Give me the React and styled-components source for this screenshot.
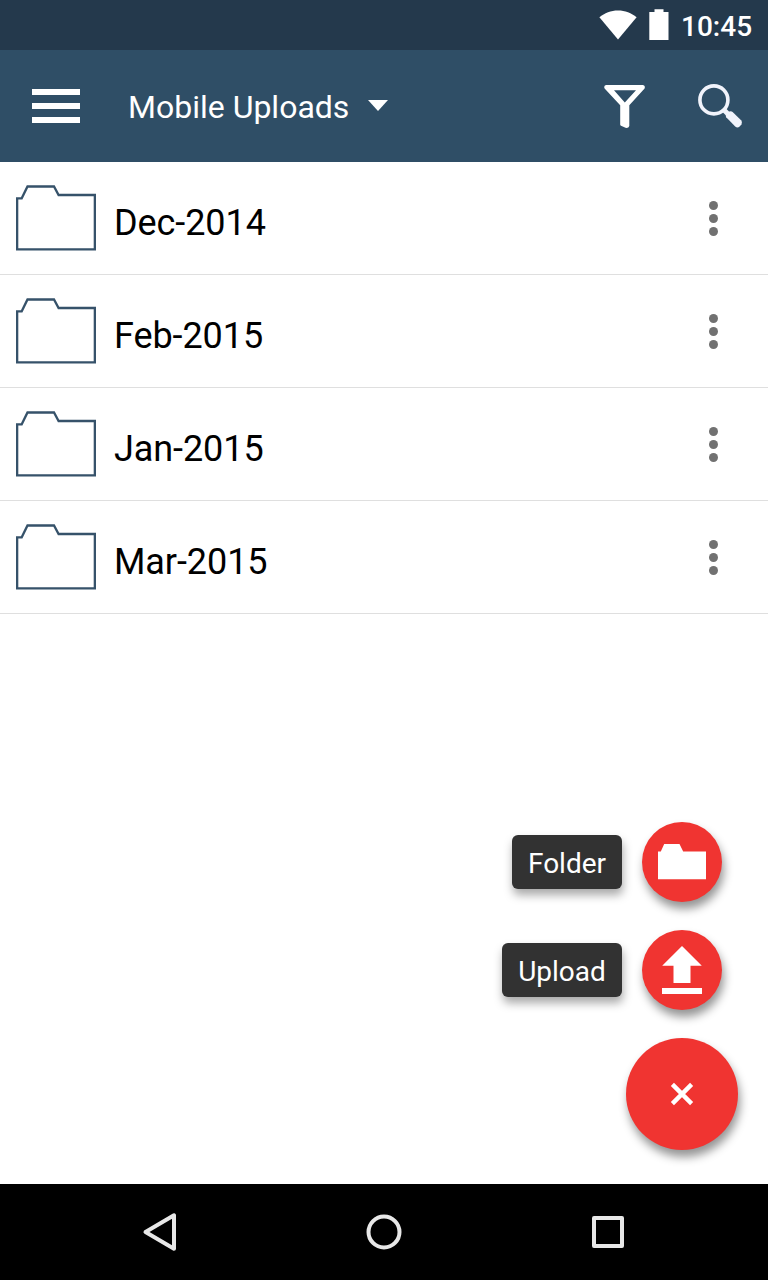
import React from "react";
import styled, { createGlobalStyle } from "styled-components";

const GlobalStyle = createGlobalStyle`
  *, *::before, *::after { box-sizing: border-box; }
  body { margin: 0; background: #fff; }
  button { border: 0; padding: 0; background: none; font: inherit; color: inherit; cursor: pointer; }
  svg { display: block; flex: none; }
`;

const Screen = styled.div`
  position: relative;
  display: flex;
  flex-direction: column;
  width: 768px;
  height: 1280px;
  overflow: hidden;
  background: #fff;
  font-family: Roboto, "Liberation Sans", sans-serif;
`;

const StatusBar = styled.header`
  display: flex;
  align-items: center;
  justify-content: flex-end;
  gap: 12px;
  flex: none;
  height: 50px;
  padding-right: 16px;
  background: #24394c;
  color: #fff;
`;

const Clock = styled.time`
  font-size: 28px;
  font-weight: 500;
  line-height: 32px;
  padding-top: 3px;
  width: 71px;
  white-space: nowrap;
`;

const AppBar = styled.div`
  display: flex;
  align-items: center;
  flex: none;
  height: 112px;
  padding: 0 24px 0 32px;
  background: #2f4e66;
  color: #fff;
`;

const MenuButton = styled.button`
  display: flex;
  flex-direction: column;
  gap: 8px;
  width: 48px;
  margin-right: 48px;
`;

const MenuLine = styled.span`
  height: 6px;
  background: #fff;
`;

const Title = styled.button`
  display: flex;
  align-items: center;
  gap: 19px;
  flex: 1;
  font-size: 32px;
  line-height: 38px;
  padding-top: 2px;
  white-space: nowrap;
`;

const Caret = styled.span`
  padding-bottom: 3px;
`;

const Actions = styled.div`
  display: flex;
  align-items: center;
  gap: 52px;
`;

const List = styled.ul`
  flex: 1;
  margin: 0;
  padding: 0;
  list-style: none;
`;

const Row = styled.li`
  display: flex;
  align-items: center;
  height: 113px;
  padding: 0 48px 0 16px;
  border-bottom: 1px solid #dfdfdf;
`;

const RowName = styled.span`
  flex: 1;
  padding: 9px 0 0 18px;
  font-size: 36px;
  line-height: 42px;
  letter-spacing: -0.08px;
  color: #000;
`;

const MoreButton = styled.button`
  display: flex;
  flex-direction: column;
  align-items: center;
  gap: 4px;
  width: 13px;
`;

const Dot = styled.span`
  width: 9px;
  height: 9px;
  border-radius: 50%;
  background: #717171;
`;

const SpeedDial = styled.div`
  position: absolute;
  right: 30px;
  bottom: 130px;
  display: flex;
  flex-direction: column;
  align-items: flex-end;
  gap: 28px;
`;

const DialItem = styled.div`
  display: flex;
  align-items: center;
  gap: 20px;
  margin-right: 16px;
`;

const DialLabel = styled.span`
  display: flex;
  align-items: center;
  justify-content: center;
  width: ${(p) => p.$width}px;
  height: 54px;
  padding-top: 3px;
  border-radius: 6px;
  background: #323232;
  color: #fff;
  font-size: 28px;
  line-height: 32px;
  box-shadow: 1px 6px 10px rgba(0, 0, 0, 0.34);
`;

const Fab = styled.button`
  display: flex;
  align-items: center;
  justify-content: center;
  width: ${(p) => p.$size}px;
  height: ${(p) => p.$size}px;
  border-radius: 50%;
  background: #f03431;
  color: #fff;
  box-shadow: 2px 7px 10px rgba(0, 0, 0, 0.42);
`;

const NavBar = styled.nav`
  display: flex;
  align-items: center;
  justify-content: space-between;
  flex: none;
  height: 96px;
  padding: 0 136px;
  background: #000;
`;

const NavButton = styled.button`
  width: 48px;
  height: 48px;
`;

const WifiIcon = () => (
  <svg width="38" height="30" viewBox="0 0 38 30" fill="currentColor">
    <path d="M19 29.5 0.4 7.2C5.5 2.8 12 0.4 19 0.4S32.5 2.8 37.6 7.2Z" />
  </svg>
);

const BatteryIcon = () => (
  <svg width="20" height="32" viewBox="0 0 20 32" fill="currentColor">
    <path d="M5.500 0.300H14.500V3H19.500V31H0.300V3H5.500Z" />
  </svg>
);

const FilterIcon = () => (
  <svg width="42" height="44" viewBox="0 0 42 44" fill="currentColor">
    <path
      fillRule="evenodd"
      d="M2 1H39Q41.600 1.800 40.600 4.400L25.300 21.200V42Q24.500 44.400 21.500 43.800L17 41.800Q16.200 41.400 16.200 40.500V21.200L0.600 4.400Q-0.600 1.800 2 1ZM10 6.200 20.800 18.600 32 6.200Z"
    />
  </svg>
);

const SearchIcon = () => (
  <svg width="46" height="46" viewBox="0 0 46 46" fill="none" stroke="#f1f3fb">
    <circle cx="15.900" cy="16.900" r="14" strokeWidth="3.600" />
    <path d="M26 27 31 32" strokeWidth="5" />
    <path
      d="M28.200 34.300 37.200 43.400Q39.400 45.600 41.600 43.600L43.500 41.400Q45 39.600 43.100 37.300L34.600 28.900Q33 27.900 31.400 28.600L28.300 31.200Q27.200 32.700 28.200 34.300Z"
      fill="#f1f3fb"
      stroke="none"
    />
  </svg>
);

const CaretIcon = () => (
  <svg width="20" height="11" viewBox="0 0 20 11" fill="currentColor">
    <path d="M0 0H20L10 11Z" />
  </svg>
);

const FolderOutlineIcon = () => (
  <svg width="80" height="66" viewBox="0 0 80 66" fill="none" stroke="#36526a" strokeWidth="2.300">
    <path d="M1.150 64.400V13.300H5.700L11.500 1.500H38L42.600 10H78.850V64.400Z" />
  </svg>
);

const FolderIcon = () => (
  <svg width="48" height="36" viewBox="0 0 48 36" fill="currentColor">
    <path d="M0 35.200V7.500H2.800L6.200 0H21.500L25.200 7.500H48V35.200Z" />
  </svg>
);

const UploadIcon = () => (
  <svg width="40" height="48" viewBox="0 0 40 48" fill="currentColor">
    <path d="M20 0 39.800 19.700H28.500V37H11.500V19.700H0.200ZM0 42H40V48H0Z" />
  </svg>
);

const CloseIcon = () => (
  <svg width="24" height="24" viewBox="0 0 24 24" stroke="currentColor" strokeWidth="4.400">
    <path d="M2.400 2.400 21.600 21.600M21.600 2.400 2.400 21.600" />
  </svg>
);

const navProps = {
  width: 48,
  height: 48,
  viewBox: "0 0 48 48",
  fill: "none",
  stroke: "#e8e8e8",
  strokeWidth: 4,
  strokeLinejoin: "round",
};

const folders = ["Dec-2014", "Feb-2015", "Jan-2015", "Mar-2015"];

export default function App() {
  return (
    <Screen>
      <GlobalStyle />
      <StatusBar>
        <WifiIcon />
        <BatteryIcon />
        <Clock>10:45</Clock>
      </StatusBar>
      <AppBar>
        <MenuButton aria-label="Menu">
          <MenuLine />
          <MenuLine />
          <MenuLine />
        </MenuButton>
        <Title>
          Mobile Uploads
          <Caret>
            <CaretIcon />
          </Caret>
        </Title>
        <Actions>
          <button aria-label="Filter">
            <FilterIcon />
          </button>
          <button aria-label="Search">
            <SearchIcon />
          </button>
        </Actions>
      </AppBar>
      <List>
        {folders.map((name) => (
          <Row key={name}>
            <FolderOutlineIcon />
            <RowName>{name}</RowName>
            <MoreButton aria-label="More">
              <Dot />
              <Dot />
              <Dot />
            </MoreButton>
          </Row>
        ))}
      </List>
      <SpeedDial>
        <DialItem>
          <DialLabel $width={110}>Folder</DialLabel>
          <Fab $size={80} aria-label="New folder">
            <FolderIcon />
          </Fab>
        </DialItem>
        <DialItem>
          <DialLabel $width={120}>Upload</DialLabel>
          <Fab $size={80} aria-label="Upload file">
            <UploadIcon />
          </Fab>
        </DialItem>
        <Fab $size={112} aria-label="Close">
          <CloseIcon />
        </Fab>
      </SpeedDial>
      <NavBar>
        <NavButton aria-label="Back">
          <svg {...navProps}>
            <path d="M9.500 24 38 7.300V40.700Z" />
          </svg>
        </NavButton>
        <NavButton aria-label="Home">
          <svg {...navProps}>
            <circle cx="24" cy="24" r="15.500" />
          </svg>
        </NavButton>
        <NavButton aria-label="Recent">
          <svg {...navProps}>
            <rect x="10" y="10" width="28" height="28" />
          </svg>
        </NavButton>
      </NavBar>
    </Screen>
  );
}
